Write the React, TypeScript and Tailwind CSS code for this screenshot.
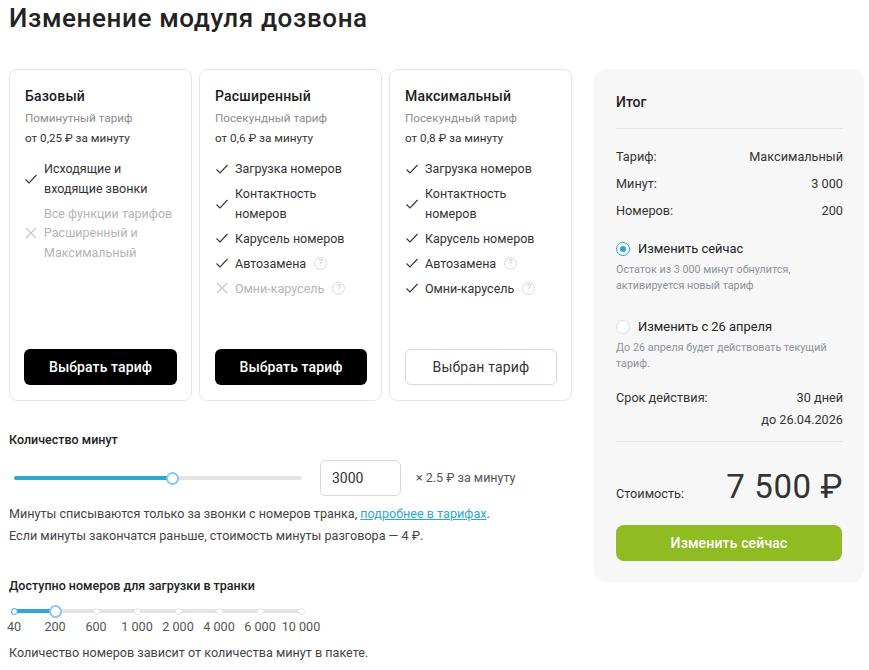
import React from "react";

const Check = ({ off }: { off?: boolean }) =>
  off ? (
    <svg width="14" height="14" viewBox="0 0 14 14" fill="none" stroke="#c4c4c4" strokeWidth="1.1" className="shrink-0">
      <path d="M2 2 L12 12 M12 2 L2 12" />
    </svg>
  ) : (
    <svg width="14" height="14" viewBox="0 0 14 14" fill="none" stroke="#333" strokeWidth="1.1" className="shrink-0">
      <path d="M1.5 7.5 L5 11 L12.5 3" />
    </svg>
  );

const Q = () => (
  <span className="inline-flex ml-[8px] w-[13px] h-[13px] rounded-full border border-[#d9d9d9] text-[#c8c8c8] text-[9px] leading-[11px] justify-center shrink-0">?</span>
);

type Item = { t: React.ReactNode; off?: boolean };

const Feature = ({ t, off }: Item) => (
  <li className={`flex items-center gap-[6px] text-[12.5px] leading-[19.5px] ${off ? "text-[#b5b5b5]" : "text-[#333]"}`}>
    <Check off={off} />
    <span className="flex items-center">{t}</span>
  </li>
);

const Card = ({ name, sub, price, items, selected, first }: { name: string; sub: string; price: string; items: Item[]; selected?: boolean; first?: boolean }) => (
  <div className={`w-[183px] h-[332px] border border-[#e6e6e6] rounded-[8px] pr-[14px] pt-[16px] pb-[15px] flex flex-col ${first ? "pl-[14px]" : "pl-[15px]"}`}>
    <div className={first ? "pl-[1px]" : ""}>
      <div className="text-[14px] leading-[20px] font-medium text-[#1c1c1c] tracking-[0.2px]">{name}</div>
      <div className="text-[11.7px] leading-[20px] mt-[2px] text-[#8c8c8c]">{sub}</div>
      <div className="text-[11.7px] leading-[20px] text-[#333]">{price}</div>
    </div>
    <ul className="mt-[11px] flex flex-col gap-[5.5px] flex-1">
      {items.map((it, i) => (
        <Feature key={i} {...it} />
      ))}
    </ul>
    {selected ? (
      <button className="h-[36px] rounded-[6px] border border-[#d9d9d9] bg-white text-[#333] text-[14px] tracking-[0.2px]">Выбран тариф</button>
    ) : (
      <button className="h-[36px] rounded-[6px] bg-black text-white text-[14px] font-medium tracking-[0.1px]">Выбрать тариф</button>
    )}
  </div>
);

const Row = ({ a, b }: { a: string; b: string }) => (
  <div className="flex justify-between text-[12.7px] leading-[20px] text-[#333]">
    <span>{a}</span>
    <span>{b}</span>
  </div>
);

const Radio = ({ on }: { on?: boolean }) =>
  on ? (
    <span className="w-[14px] h-[14px] rounded-full border border-[#2ea8cf] flex items-center justify-center shrink-0">
      <span className="w-[6px] h-[6px] rounded-full bg-[#2ea8cf]" />
    </span>
  ) : (
    <span className="w-[14px] h-[14px] rounded-full border border-[#dcdcdc] bg-white shrink-0" />
  );

const ticks = ["40", "200", "600", "1 000", "2 000", "4 000", "6 000", "10 000"];

export default function App() {
  return (
    <div className="w-[869px] h-[670px] overflow-hidden bg-white pl-[9px] font-['Roboto',sans-serif] text-[#333]">
      <h1 className="text-[26px] leading-[36px] font-medium text-[#222] tracking-[0.62px] h-[69px]">Изменение модуля дозвона</h1>
      <div className="flex gap-[22px] items-start">
        <div className="w-[563px]">
          <div className="flex gap-[7px]">
            <Card
              first
              name="Базовый"
              sub="Поминутный тариф"
              price="от 0,25 ₽ за минуту"
              items={[
                { t: <>Исходящие и<br />входящие звонки</> },
                { t: <>Все функции тарифов<br />Расширенный и<br />Максимальный</>, off: true },
              ]}
            />
            <Card
              name="Расширенный"
              sub="Посекундный тариф"
              price="от 0,6 ₽ за минуту"
              items={[
                { t: "Загрузка номеров" },
                { t: <>Контактность<br />номеров</> },
                { t: "Карусель номеров" },
                { t: <>Автозамена<Q /></> },
                { t: <>Омни-карусель<Q /></>, off: true },
              ]}
            />
            <Card
              name="Максимальный"
              sub="Посекундный тариф"
              price="от 0,8 ₽ за минуту"
              selected
              items={[
                { t: "Загрузка номеров" },
                { t: <>Контактность<br />номеров</> },
                { t: "Карусель номеров" },
                { t: <>Автозамена<Q /></> },
                { t: <>Омни-карусель<Q /></> },
              ]}
            />
          </div>

          <div className="mt-[30px] text-[12.5px] leading-[18px] font-medium text-[#222]">Количество минут</div>
          <div className="mt-[11px] flex items-center h-[36px]">
            <div className="ml-[5px] w-[288px] h-[4px] rounded-full bg-[#e4e4e4] relative">
              <div className="h-full w-[158px] rounded-full bg-[#2ea8cf]" />
              <span className="absolute left-[151.5px] top-[-4.5px] w-[13px] h-[13px] rounded-full bg-white border-2 border-[#8cc6ee]" />
            </div>
            <div className="ml-[18px] w-[81px] h-[36px] rounded-[6px] border border-[#d9d9d9] flex items-center pl-[11px] text-[14px] text-[#333]">3000</div>
            <div className="ml-[15px] text-[12.5px] text-[#555]">× 2.5 ₽ за минуту</div>
          </div>
          <p className="mt-[7px] text-[12.6px] leading-[22px] text-[#444]">
            Минуты списываются только за звонки с номеров транка, <span className="text-[#2ea8cf] underline">подробнее в тарифах</span>.
            <br />
            Если минуты закончатся раньше, стоимость минуты разговора — 4 ₽.
          </p>

          <div className="mt-[30px] text-[12.5px] leading-[18px] font-medium text-[#222]">Доступно номеров для загрузки в транки</div>
          <div className="mt-[14px] ml-[5px] w-[288px] h-[4px] rounded-full bg-[#e4e4e4] relative">
            <div className="h-full w-[41px] bg-[#2ea8cf]" />
            {[0, 41, 82, 123, 164, 205, 246, 287].map((x, i) =>
              i === 1 ? (
                <span key={i} style={{ left: x - 6.5 }} className="absolute top-[-4.5px] w-[13px] h-[13px] rounded-full bg-white border-2 border-[#8cc6ee]" />
              ) : (
                <span
                  key={i}
                  style={{ left: x - 3.5 }}
                  className={`absolute top-[-1.5px] w-[7px] h-[7px] rounded-full bg-white border ${i === 0 ? "border-[#2ea8cf]" : "border-[#e4e4e4]"}`}
                />
              )
            )}
          </div>
          <div className="relative h-[16px] mt-[6px] text-[12.6px] leading-[16px] text-[#555] ml-[5px]">
            {ticks.map((t, i) => (
              <span key={t} style={{ left: i * 41 - 41 }} className="absolute w-[82px] text-center">
                {t}
              </span>
            ))}
          </div>
          <p className="mt-[9px] text-[12.6px] leading-[18px] text-[#444]">Количество номеров зависит от количества минут в пакете.</p>
        </div>

        <aside className="w-[270px] h-[513px] rounded-[12px] bg-[#f7f7f7] pl-[22px] pr-[21px] pt-[24px]">
          <div className="text-[14px] leading-[18px] font-medium text-[#222]">Итог</div>
          <div className="h-px bg-[#e6e6e6] mt-[17px]" />
          <div className="mt-[18px] flex flex-col gap-[7px]">
            <Row a="Тариф:" b="Максимальный" />
            <Row a="Минут:" b="3 000" />
            <Row a="Номеров:" b="200" />
          </div>
          <div className="mt-[19px] flex items-center gap-[8px] text-[12.9px] leading-[18px] text-[#222]">
            <Radio on />
            <span>Изменить сейчас</span>
          </div>
          <div className="mt-[4px] text-[10.75px] leading-[15.5px] text-[#8d9299]">
            Остаток из 3 000 минут обнулится,
            <br />
            активируется новый тариф
          </div>
          <div className="mt-[25px] flex items-center gap-[8px] text-[12.9px] leading-[18px] text-[#222]">
            <Radio />
            <span>Изменить с 26 апреля</span>
          </div>
          <div className="mt-[4px] text-[10.75px] leading-[15.5px] text-[#8d9299]">
            До 26 апреля будет действовать текущий
            <br />
            тариф.
          </div>
          <div className="mt-[17px] flex justify-between text-[12.7px] leading-[20px] text-[#333]">
            <span>Срок действия:</span>
            <span className="text-right">30 дней</span>
          </div>
          <div className="text-right text-[12.7px] leading-[20px] mt-[2px] text-[#333]">до 26.04.2026</div>
          <div className="h-px bg-[#e6e6e6] mt-[11px]" />
          <div className="mt-[25px] flex justify-between items-end h-[40px]">
            <span className="text-[12.7px] leading-[20px] text-[#333] mb-[3px]">Стоимость:</span>
            <span className="text-[33px] leading-[40px] text-[#333] tracking-[0.6px]">7 500 ₽</span>
          </div>
          <button className="mt-[18px] w-[226px] h-[36px] rounded-[8px] bg-[#8fbc23] text-white text-[14px] font-medium tracking-[0.15px]">Изменить сейчас</button>
        </aside>
      </div>
    </div>
  );
}
